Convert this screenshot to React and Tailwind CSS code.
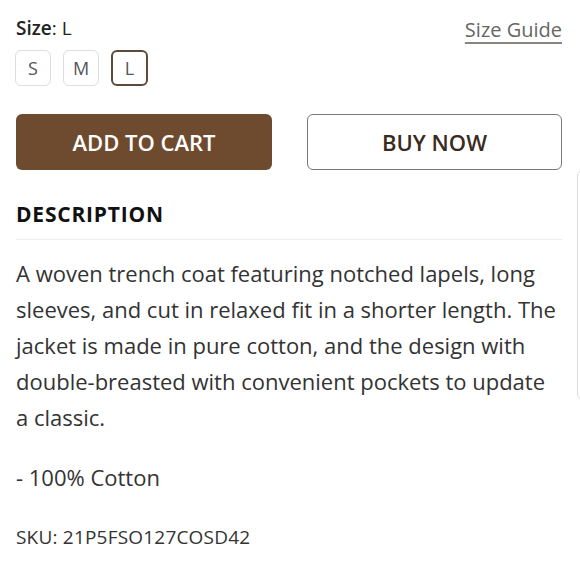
import React from "react";

export default function App() {
  return (
    <div className="relative w-[580px] h-[580px] bg-white overflow-hidden" style={{ fontFamily: "'Open Sans', sans-serif" }}>
      <div className="px-4 pt-[16px]">
        <div className="flex items-start justify-between">
          <div className="text-[19px] leading-[24px] text-[#222]">
            <span className="font-semibold">Size</span>: L
          </div>
          <a className="text-[20px] leading-[24px] text-[#666] underline decoration-[#8a8580] decoration-2 underline-offset-[5px] mt-[2px] mr-[2px]">Size Guide</a>
        </div>
        <div className="flex gap-3 mt-[8px] -ml-px">
          <div className="w-9 h-9 rounded-md border border-[#ddd] flex items-center justify-center text-[18px] text-[#555]">S</div>
          <div className="w-9 h-9 rounded-md border border-[#ddd] flex items-center justify-center text-[18px] text-[#555]">M</div>
          <div className="w-[37px] h-9 rounded-md border-2 border-[#5e4a3a] flex items-center justify-center text-[18px] text-[#555]">L</div>
        </div>
        <div className="flex justify-between mt-7 mr-[2px]">
          <button className="w-[256px] h-[56px] rounded-md bg-[#6e4b2f] text-white text-[22px] font-semibold">ADD TO CART</button>
          <button className="w-[255px] h-[56px] rounded-md border-[1.5px] border-[#777] text-[#3b2a1e] text-[22px] font-semibold">BUY NOW</button>
        </div>
        <div className="mt-[32px] text-[21px] leading-[24px] font-bold text-[#111] tracking-[0.8px]">DESCRIPTION</div>
        <div className="mt-[13px] h-px bg-[#eee] mr-[2px]"></div>
        <p className="mt-[15px] text-[22px] leading-[36px] text-[#333] whitespace-nowrap">
          A woven trench coat featuring notched lapels, long<br />
          sleeves, and cut in relaxed fit in a shorter length. The<br />
          jacket is made in pure cotton, and the design with<br />
          double-breasted with convenient pockets to update<br />
          a classic.
        </p>
        <p className="mt-[24px] text-[22px] leading-[36px] text-[#333]">- 100% Cotton</p>
        <p className="mt-[30px] text-[19px] leading-[24px] text-[#333] tracking-[0.2px]">SKU: 21P5FSO127COSD42</p>
      </div>
      <div className="absolute left-[577px] top-[170px] w-[20px] h-[230px] rounded-l-md border border-[#ddd] bg-white"></div>
    </div>
  );
}
